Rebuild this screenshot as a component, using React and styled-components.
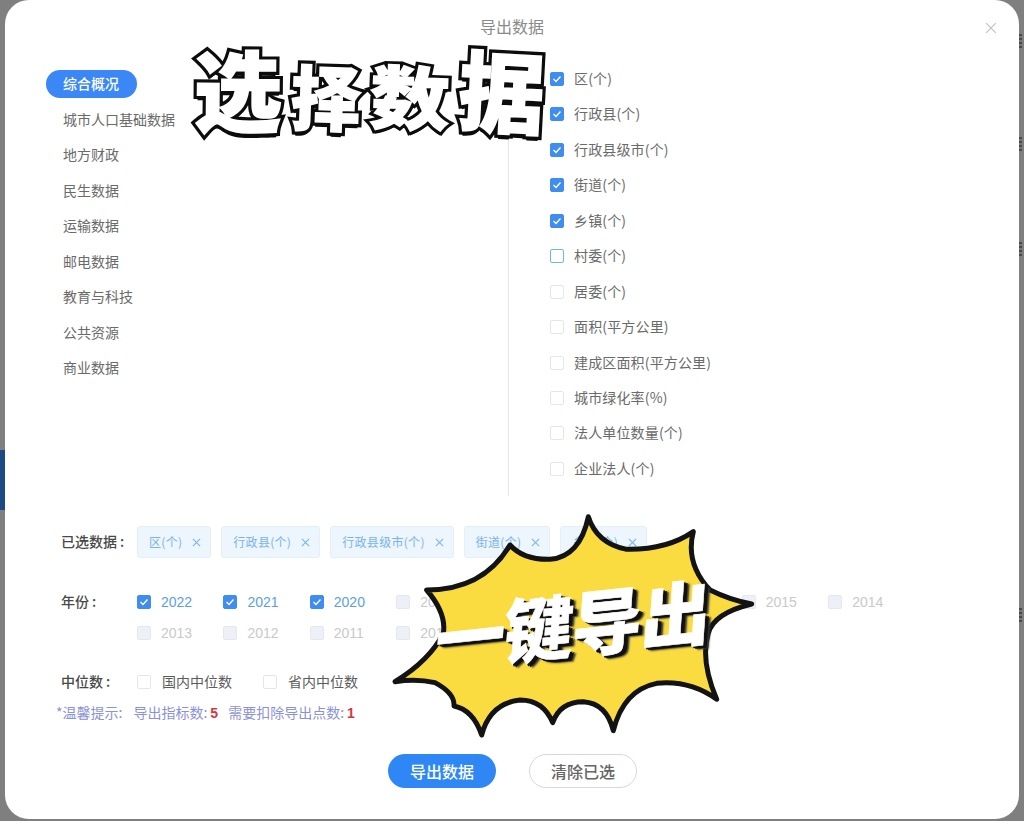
import React from "react";
import styled, { createGlobalStyle } from "styled-components";

const Global = createGlobalStyle`
  html, body { margin: 0; padding: 0; background: #7f7f7f; }
  body { font-family: "Noto Sans CJK SC", "Noto Sans", sans-serif; overflow: hidden; }
  * { box-sizing: border-box; }
`;

const Page = styled.div`
  position: relative;
  width: 1024px;
  height: 821px;
  overflow: hidden;
  background: #7f7f7f;
`;
const BackdropStrip = styled.div`
  position: absolute;
  left: 0;
  top: 450px;
  width: 6px;
  height: 60px;
  background: #1c4a86;
`;
const BackdropMark = styled.div`
  position: absolute;
  left: 1019px;
  top: ${(p) => p.$top}px;
  width: 3px;
  height: 14px;
  background: repeating-linear-gradient(#4a4a4a 0 2px, #777 2px 4px);
`;
const Modal = styled.div`
  position: relative;
  margin-left: 5px;
  width: 1014px;
  height: 819px;
  background: #fff;
  border-radius: 24px;
  display: flex;
  flex-direction: column;
`;
const Header = styled.header`
  position: relative;
  height: 54px;
  padding-bottom: 2px;
  display: flex;
  align-items: center;
  justify-content: center;
  font-size: 16px;
  color: #8a8a8a;
`;
const Close = styled.span`
  position: absolute;
  right: 22px;
  top: 22px;
  width: 12px;
  height: 12px;
  color: #c2c2c2;
  display: flex;
`;
const Body = styled.div`
  display: flex;
  height: 442px;
`;
const Nav = styled.nav`
  width: 503px;
  padding: 16px 0 0 41px;
  display: flex;
  flex-direction: column;
  align-items: flex-start;
  gap: 7.5px;
`;
const NavItem = styled.div`
  height: 28px;
  line-height: 26px;
  padding: 0 18px 0 17px;
  border-radius: 14px;
  font-size: 14px;
  font-weight: ${(p) => (p.$active ? 500 : 400)};
  color: ${(p) => (p.$active ? "#fff" : "#6a6a6a")};
  background: ${(p) => (p.$active ? "#3b87f5" : "transparent")};
  white-space: nowrap;
`;
const Metrics = styled.div`
  flex: 1;
  border-left: 1.5px solid #e6e6e6;
  padding: 7.3px 0 0 41px;
  display: flex;
  flex-direction: column;
`;
const MetricRow = styled.label`
  height: 35.45px;
  display: flex;
  align-items: center;
  gap: 10px;
  font-size: 14px;
  letter-spacing: 0.15px;
  color: #6a6a6a;
`;
const Caption = styled.span`
  margin-bottom: 2px;
`;
const Box = styled.span`
  width: 14px;
  height: 14px;
  flex: none;
  border-radius: 2px;
  display: flex;
  align-items: center;
  justify-content: center;
  background: ${(p) =>
    p.$state === "checked" ? "#3f8df0" : p.$state === "disabled" ? "#eef0f8" : "#fff"};
  border: 1px solid
    ${(p) =>
      p.$state === "checked"
        ? "#3f8df0"
        : p.$state === "focus"
        ? "#72b4ec"
        : p.$state === "disabled"
        ? "#e4e7f2"
        : "#e6e6e6"};
`;
const Form = styled.section`
  padding: 30px 0 0 56px;
  display: flex;
  flex-direction: column;
`;
const Row = styled.div`
  display: flex;
  align-items: flex-start;
  margin-top: ${(p) => p.$top || 0}px;
`;
const Label = styled.div`
  width: 76px;
  flex: none;
  height: ${(p) => p.$h || 31}px;
  line-height: ${(p) => (p.$h || 31) - 2}px;
  font-size: 14px;
  font-weight: 500;
  color: #484848;
`;
const Colon = styled.span`
  margin-left: 3px;
`;
const Tags = styled.div`
  display: flex;
  gap: 10px;
`;
const Tag = styled.div`
  height: 32px;
  padding: 0 9px 0 11px;
  display: flex;
  align-items: center;
  gap: 10px;
  background: #edf5fd;
  border: 1px solid #e3f0fb;
  border-radius: 3px;
  font-size: 12px;
  letter-spacing: 0.3px;
  color: #79b4ee;
  white-space: nowrap;
`;
const Years = styled.div`
  display: grid;
  grid-template-columns: repeat(9, 86.4px);
  grid-auto-rows: 31px;
`;
const Year = styled.div`
  display: flex;
  align-items: center;
  gap: 10px;
  font-family: "Liberation Sans", "Noto Sans CJK SC", sans-serif;
  font-size: 14px;
  color: ${(p) => (p.$on ? "#5a9fe6" : "#c9c9c9")};
`;
const Medians = styled.div`
  display: flex;
  gap: 31px;
`;
const Median = styled.div`
  height: 31px;
  display: flex;
  align-items: center;
  gap: 11px;
  font-size: 14px;
  color: #5c5c5c;
`;
const Hint = styled.div`
  margin: 5px 0 0 -5px;
  height: 20px;
  line-height: 18px;
  font-size: 14px;
  color: #8b92d8;
  white-space: nowrap;
  display: flex;
`;
const HintPart = styled.span`
  margin-left: ${(p) => p.$gap || 0}px;
`;
const Num = styled.b`
  margin-left: 3px;
  font-family: "Liberation Sans", sans-serif;
  font-weight: 700;
  color: #d4383c;
`;
const Footer = styled.div`
  margin-top: 31px;
  display: flex;
  justify-content: center;
  gap: 33px;
  padding-left: 1px;
`;
const Button = styled.button`
  width: 108px;
  height: 34px;
  border-radius: 17px;
  padding: 0;
  font: 500 16px "Noto Sans CJK SC", sans-serif;
  background: ${(p) => (p.$primary ? "#2f87f6" : "#fff")};
  color: ${(p) => (p.$primary ? "#fff" : "#666")};
  border: ${(p) => (p.$primary ? "none" : "1px solid #d8d8d8")};
`;

/* stickers lying over the dialog */
const TitleSticker = styled.div`
  position: absolute;
  left: 189px;
  top: 46px;
  display: flex;
  align-items: center;
  gap: 9px;
  font-family: "Noto Sans CJK SC", sans-serif;
  font-weight: 900;
  line-height: 1;
`;
const TitleChar = styled.span`
  position: relative;
  display: block;
  font-size: ${(p) => p.$size}px;
  color: #0c0c0c;
  -webkit-text-stroke: 8px #0c0c0c;
  text-shadow: 0 2px 0 #0c0c0c, 0 4px 0 #0c0c0c, 0 5px 0 #0c0c0c;
  transform: translateY(${(p) => p.$y}px) rotate(${(p) => p.$rot}deg) scaleY(${(p) => p.$sy || 1});
  &::after {
    content: attr(data-char);
    position: absolute;
    left: 0;
    top: 0;
    color: #fff;
    -webkit-text-stroke: 1.5px #fff;
    text-shadow: none;
  }
`;
const Burst = styled.svg`
  position: absolute;
  left: 375px;
  top: 500px;
  width: 400px;
  height: 250px;
`;
const BurstText = styled.div`
  position: absolute;
  left: 430px;
  top: 587px;
  font-family: "Noto Sans CJK SC", sans-serif;
  font-weight: 900;
  font-size: 70px;
  line-height: 1;
  letter-spacing: -1px;
  color: #fff;
  white-space: nowrap;
  transform: rotate(-6deg) skewX(-10deg);
  -webkit-text-stroke: 0.6px #fff;
  text-shadow: 2px 2px 0 #111, 4px 3px 0 #111, 6px 4px 2px #333;
`;

const X = ({ size = 10, w = 1.2 }) => (
  <svg width={size} height={size} viewBox="0 0 10 10" fill="none" stroke="currentColor" strokeWidth={w}>
    <path d="M1 1 L9 9 M9 1 L1 9" />
  </svg>
);
const Tick = () => (
  <svg width="10" height="10" viewBox="0 0 10 10" fill="none" stroke="#fff" strokeWidth="1.4">
    <path d="M1.5 5 L4 7.5 L8.5 2.5" />
  </svg>
);
const Check = ({ state }) => <Box $state={state}>{state === "checked" && <Tick />}</Box>;

const nav = ["综合概况", "城市人口基础数据", "地方财政", "民生数据", "运输数据", "邮电数据", "教育与科技", "公共资源", "商业数据"];
const metrics = [
  ["区(个)", "checked"],
  ["行政县(个)", "checked"],
  ["行政县级市(个)", "checked"],
  ["街道(个)", "checked"],
  ["乡镇(个)", "checked"],
  ["村委(个)", "focus"],
  ["居委(个)", "empty"],
  ["面积(平方公里)", "empty"],
  ["建成区面积(平方公里)", "empty"],
  ["城市绿化率(%)", "empty"],
  ["法人单位数量(个)", "empty"],
  ["企业法人(个)", "empty"],
];
const tags = ["区(个)", "行政县(个)", "行政县级市(个)", "街道(个)", "乡镇(个)"];
const years = [2022, 2021, 2020, 2019, 2018, 2017, 2016, 2015, 2014, 2013, 2012, 2011, 2010];
const titleChars = [
  { c: "选", size: 88, rot: 0.5, y: -3 },
  { c: "择", size: 70, rot: 2, y: 5 },
  { c: "数", size: 80, rot: 2, y: 4, sy: 0.86 },
  { c: "据", size: 86, rot: 3, y: -2, sy: 1.02 },
];

export default function App() {
  return (
    <Page>
      <Global />
      <BackdropStrip />
      {[34, 137, 242, 608].map((t) => (
        <BackdropMark key={t} $top={t} />
      ))}
      <Modal>
        <Header>
          导出数据
          <Close><X size={12} w={1} /></Close>
        </Header>
        <Body>
          <Nav>
            {nav.map((n, i) => (
              <NavItem key={n} $active={i === 0}>{n}</NavItem>
            ))}
          </Nav>
          <Metrics>
            {metrics.map(([m, s]) => (
              <MetricRow key={m}>
                <Check state={s} />
                <Caption>{m}</Caption>
              </MetricRow>
            ))}
          </Metrics>
        </Body>
        <Form>
          <Row>
            <Label $h={32}>已选数据<Colon>:</Colon></Label>
            <Tags>
              {tags.map((t) => (
                <Tag key={t}><Caption>{t}</Caption><X size={9} /></Tag>
              ))}
            </Tags>
          </Row>
          <Row $top={28.5}>
            <Label>年份<Colon>:</Colon></Label>
            <Years>
              {years.map((y, i) => (
                <Year key={y} $on={i < 3}>
                  <Check state={i < 3 ? "checked" : "disabled"} />
                  {y}
                </Year>
              ))}
            </Years>
          </Row>
          <Row $top={18}>
            <Label>中位数<Colon>:</Colon></Label>
            <Medians>
              <Median><Check state="empty" /><Caption>国内中位数</Caption></Median>
              <Median><Check state="empty" /><Caption>省内中位数</Caption></Median>
            </Medians>
          </Row>
          <Hint>
            <HintPart>*温馨提示:</HintPart>
            <HintPart $gap={11}>导出指标数:<Num>5</Num></HintPart>
            <HintPart $gap={10}>需要扣除导出点数:<Num>1</Num></HintPart>
          </Hint>
        </Form>
        <Footer>
          <Button $primary>导出数据</Button>
          <Button>清除已选</Button>
        </Footer>
        <TitleSticker>
          {titleChars.map((t) => (
            <TitleChar key={t.c} data-char={t.c} $size={t.size} $rot={t.rot} $y={t.y} $sy={t.sy}>
              {t.c}
            </TitleChar>
          ))}
        </TitleSticker>
        <Burst viewBox="0 0 1200 750">
          <path
            d="M625 50 Q650 130 740 148 Q860 150 940 95 Q915 190 990 270 Q1050 300 1115 312 Q1000 340 985 400 Q960 480 1010 598 Q930 540 830 550 Q730 570 700 692 Q680 610 610 605 Q540 605 518 668 Q490 600 420 600 Q330 610 305 705 Q280 630 222 618 Q225 580 165 548 Q110 535 45 545 Q150 480 190 400 Q200 340 140 270 Q310 270 390 135 Q430 180 510 178 Q600 170 625 50 Z"
            fill="#fadc40"
            stroke="#131313"
            strokeWidth="15"
            strokeLinejoin="round"
          />
        </Burst>
        <BurstText>一键导出</BurstText>
      </Modal>
    </Page>
  );
}
